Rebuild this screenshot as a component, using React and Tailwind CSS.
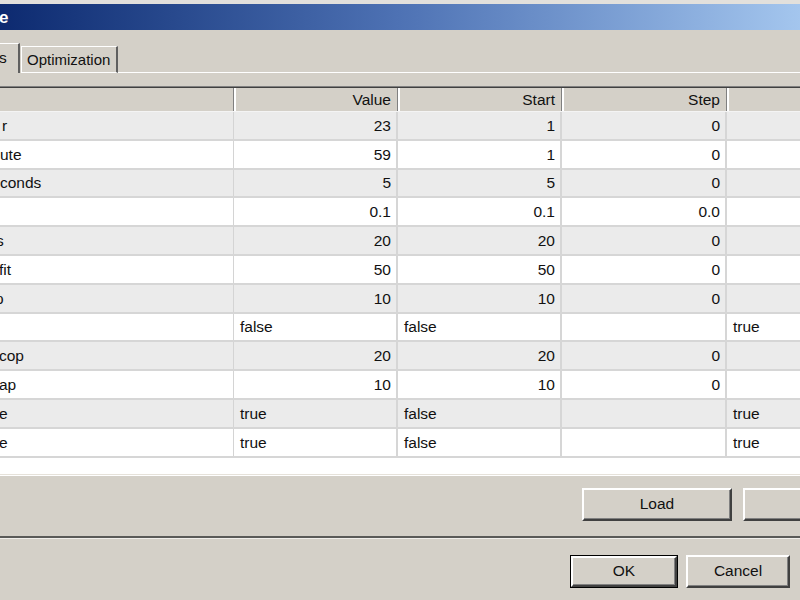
import React from "react";

const rows = [
  { name: "r", shift: "ml-[2px]", cells: ["23", "1", "0", ""] },
  { name: "ute", shift: "", cells: ["59", "1", "0", ""] },
  { name: "conds", shift: "", cells: ["5", "5", "0", ""] },
  { name: "", shift: "", cells: ["0.1", "0.1", "0.0", ""] },
  { name: "s", shift: "-ml-[4px]", cells: ["20", "20", "0", ""] },
  { name: "fit", shift: "-ml-[1px]", cells: ["50", "50", "0", ""] },
  { name: "p", shift: "-ml-[5px]", cells: ["10", "10", "0", ""] },
  { name: "", shift: "", cells: ["false", "false", "", "true"] },
  { name: "cop", shift: "-ml-[1px]", cells: ["20", "20", "0", ""] },
  { name: "ap", shift: "-ml-[1px]", cells: ["10", "10", "0", ""] },
  { name: "e", shift: "-ml-[1px]", cells: ["true", "false", "", "true"] },
  { name: "e", shift: "-ml-[1px]", cells: ["true", "false", "", "true"] },
];

const colWidths = ["w-[164px]", "w-[164px]", "w-[165px]", "w-[120px]"];

const isWord = (v) => v === "true" || v === "false";

const Button = ({ label, width, isDefault }) => {
  const face = (
    <div className="h-full flex items-center justify-center border-2 border-t-white border-l-white border-r-[#404040] border-b-[#404040] shadow-[inset_-1px_-1px_0_#808080] bg-[#d4d0c8] text-[15.5px] text-[#111]">
      {label}
    </div>
  );
  return isDefault ? (
    <div className={`${width} h-[33px] border border-black`}>{face}</div>
  ) : (
    <div className={`${width} h-[33px]`}>{face}</div>
  );
};

export default function App() {
  return (
    <div className="w-[800px] h-[600px] overflow-hidden bg-[#d4d0c8] flex flex-col font-['Liberation_Sans',Arial,sans-serif] text-[15.5px] text-[#111]">
      {/* title bar */}
      <div className="h-[4px] bg-[#e2e0dc]" />
      <div className="h-[26px] bg-linear-to-r from-[#0d2a70] via-[#4e72b4] to-[#a4c6ee] flex items-center">
        <span className="-ml-[1px] text-white font-bold text-[17px] leading-none">e</span>
      </div>

      {/* tabs */}
      <div className="h-[43px] flex items-end">
        <div className="w-[20px] shrink-0 h-[30px] border-t border-white border-r-2 border-r-[#606060] flex items-center">
          <span className="-ml-[1px] mb-[2px]">s</span>
        </div>
        <div className="ml-[1px] w-[97px] shrink-0 h-[27px] border-t border-l border-white border-r-2 border-r-[#606060] border-b border-b-white flex items-center pl-[5px] pt-[1px] text-[15px]">
          Optimization
        </div>
        <div className="flex-1 h-[1px] bg-white" />
      </div>

      <div className="h-[13px]" />

      {/* list view */}
      <div className="border-t border-[#808080]">
        <div className="border-t border-[#404040] bg-white">
          {/* header */}
          <div className="flex h-[24px] bg-[#d4d0c8] border-b border-b-[#f4f4f4]">
            <div className="w-[234px] shrink-0 border-r border-r-[#808080]" />
            {["Value", "Start", "Step", ""].map((h, i) => (
              <div
                key={i}
                className={`${colWidths[i]} shrink-0 border-l-2 border-l-white border-r border-r-[#808080] flex items-center justify-end pr-[6px]`}
              >
                {h}
              </div>
            ))}
          </div>

          {/* rows */}
          {rows.map((r, ri) => (
            <div
              key={ri}
              className={`flex h-[28.8px] border-b-2 border-b-[#d6d6d6] ${ri % 2 === 0 ? "bg-[#ebebeb]" : "bg-white"}`}
            >
              <div className="w-[234px] shrink-0 overflow-hidden flex items-center border-r border-r-[#d4d4d4]">
                <span className={r.shift}>{r.name}</span>
              </div>
              {r.cells.map((c, ci) => (
                <div
                  key={ci}
                  className={`${colWidths[ci]} shrink-0 flex items-center border-r-2 border-r-[#d6d6d6] ${isWord(c) ? "justify-start pl-[6px]" : "justify-end pr-[5px]"}`}
                >
                  {c}
                </div>
              ))}
            </div>
          ))}
          <div className="h-[16px] bg-white" />
        </div>
        <div className="h-[1px] bg-[#e6e2da]" />
        <div className="h-[1px] bg-white" />
      </div>

      {/* load row */}
      <div className="mt-[12px] flex gap-[11px] pl-[582px]">
        <Button label="Load" width="w-[150px] shrink-0" />
        <Button label="" width="w-[150px] shrink-0" />
      </div>

      {/* separator */}
      <div className="mt-[15px] h-[2px] bg-[#5a5a58]" />
      <div className="h-[1px] bg-[#f0eeea]" />

      {/* dialog buttons */}
      <div className="mt-[16px] flex gap-[8px] pl-[570px]">
        <Button label="OK" width="w-[108px] shrink-0" isDefault />
        <Button label="Cancel" width="w-[104px] shrink-0" />
      </div>
    </div>
  );
}
